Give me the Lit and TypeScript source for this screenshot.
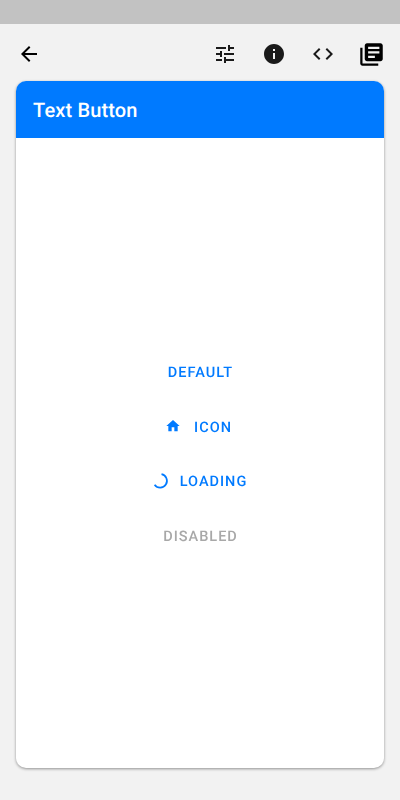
import { LitElement, html, css, svg } from 'lit';
import { customElement } from 'lit/decorators.js';

const icon = (content: unknown, size = 24) => html`
  <svg width=${size} height=${size} viewBox="0 0 24 24" fill="currentColor">${content}</svg>
`;

const back = svg`<path d="M20 11H7.83l5.59-5.59L12 4l-8 8 8 8 1.41-1.41L7.83 13H20v-2z"/>`;
const tune = svg`<path d="M3 17v2h6v-2H3zM3 5v2h10V5H3zm10 16v-2h8v-2h-8v-2h-2v6h2zM7 9v2H3v2h4v2h2V9H7zm14 4v-2H11v2h10zm-6-4h2V7h4V5h-4V3h-2v6z"/>`;
const info = svg`<path d="M12 2C6.48 2 2 6.48 2 12s4.48 10 10 10 10-4.48 10-10S17.52 2 12 2zm1 15h-2v-6h2v6zm0-8h-2V7h2v2z"/>`;
const code = svg`<path d="M9.4 16.6L4.8 12l4.6-4.6L8 6l-6 6 6 6 1.4-1.4zm5.2 0l4.6-4.6-4.6-4.6L16 6l6 6-6 6-1.4-1.4z"/>`;
const library = svg`<path d="M4 6H2v14c0 1.1.9 2 2 2h14v-2H4V6zm16-4H8c-1.1 0-2 .9-2 2v12c0 1.1.9 2 2 2h12c1.1 0 2-.9 2-2V4c0-1.1-.9-2-2-2zm-1 9H9V9h10v2zm-4 4H9v-2h6v2zm4-8H9V5h10v2z"/>`;
const home = svg`<path d="M10 20v-6h4v6h5v-8h3L12 3 2 12h3v8z"/>`;

@customElement('app-root')
export class AppRoot extends LitElement {
  static styles = css`
    :host {
      display: block;
      height: 800px;
      background: #f2f2f2;
      font-family: Roboto, sans-serif;
      text-rendering: geometricPrecision;
    }
    .status {
      height: 24px;
      background: #c2c2c2;
    }
    .toolbar {
      padding: 6px 4px 3px 4px;
      display: flex;
      align-items: center;
      color: #1a1a1a;
    }
    .tool {
      width: 49px;
      height: 48px;
      display: flex;
      align-items: center;
      justify-content: center;
    }
    .back {
      margin-right: auto;
      width: 50px;
      color: #000;
    }
    .library {
      color: #000;
    }
    .card {
      height: 687px;
      margin: 0 16px;
      background: #fff;
      border-radius: 10px;
      box-shadow: 0 1px 3px rgba(0, 0, 0, 0.4);
      display: flex;
      flex-direction: column;
      overflow: hidden;
    }
    .header {
      height: 57px;
      flex: none;
      box-sizing: border-box;
      padding: 1px 17px 0;
      display: flex;
      align-items: center;
      background: #007aff;
      color: #fff;
      font-size: 20px;
      font-weight: 500;
      letter-spacing: 0.15px;
      will-change: opacity;
    }
    .body {
      flex: 1;
      display: flex;
      flex-direction: column;
      align-items: center;
      justify-content: center;
      gap: 18.4px;
      padding: 3px 0 0 1px;
    }
    .btn {
      height: 36px;
      display: flex;
      align-items: center;
      justify-content: center;
      color: #007aff;
      font-size: 14.5px;
      font-weight: 500;
      letter-spacing: 1px;
      will-change: opacity;
    }
    .btn.disabled {
      color: #a8a8a8;
    }
    .btn svg {
      display: block;
    }
    .with-icon {
      gap: 13px;
      padding-right: 4px;
    }
    .with-icon svg {
      margin-bottom: 2px;
    }
    .with-spinner {
      gap: 11px;
      padding-right: 1px;
    }
    .with-spinner svg {
      margin-bottom: 1px;
    }
  `;

  render() {
    return html`
      <div class="status"></div>
      <div class="toolbar">
        <div class="tool back">${icon(back)}</div>
        <div class="tool">${icon(tune, 24)}</div>
        <div class="tool">${icon(info, 24)}</div>
        <div class="tool">${icon(code)}</div>
        <div class="tool library">${icon(library, 27)}</div>
      </div>
      <div class="card">
        <div class="header">Text Button</div>
        <div class="body">
          <div class="btn">DEFAULT</div>
          <div class="btn with-icon">${icon(home, 16)}ICON</div>
          <div class="btn with-spinner">
            <svg width="16" height="16" viewBox="0 0 16 16" fill="none" stroke="currentColor" stroke-width="1.7">
              <path d="M8.5 1.2A6.8 6.8 0 1 1 1.6 11.8" />
            </svg>
            LOADING
          </div>
          <div class="btn disabled">DISABLED</div>
        </div>
      </div>
    `;
  }
}
